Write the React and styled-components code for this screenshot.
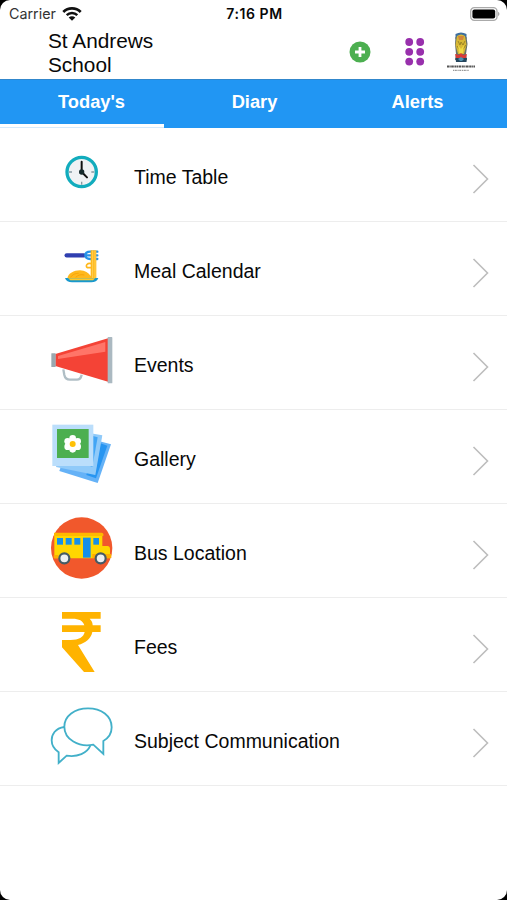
import React from "react";
import styled, { createGlobalStyle } from "styled-components";

const colors = {
  blue: "#2196f3",
  green: "#4caf50",
  purple: "#9830ac",
  divider: "#ededed",
  chevron: "#bdbdbd",
};

const GlobalStyle = createGlobalStyle`
  body {
    margin: 0;
    background: #000;
  }

  * {
    box-sizing: border-box;
  }
`;

const Screen = styled.div`
  display: flex;
  flex-direction: column;
  width: 507px;
  height: 900px;
  overflow: hidden;
  background: #fff;
  border-radius: 10px;
  color: #080808;
  font-family: "Liberation Sans", Arial, sans-serif;
`;

const StatusBar = styled.div`
  display: grid;
  grid-template-columns: 1fr auto 1fr;
  align-items: center;
  height: 27px;
  padding: 0 7px 0 9px;
  font-family: Inter, sans-serif;
  font-size: 14.3px;
`;

const Carrier = styled.div`
  display: flex;
  align-items: center;
  gap: 6px;
  color: #333;
`;

const Time = styled.div`
  font-weight: 600;
  font-size: 14px;
  letter-spacing: 0.55px;
`;

const StyledBattery = styled.svg`
  justify-self: end;
`;

const Header = styled.header`
  display: flex;
  align-items: flex-start;
  height: 52px;
  padding: 2px 31px 0 48px;
`;

const Title = styled.h1`
  width: 130px;
  margin: 0;
  font-size: 20.8px;
  font-weight: 400;
  line-height: 23.5px;
`;

const HeaderActions = styled.div`
  display: flex;
  align-items: center;
  margin-left: auto;
  height: 46px;
`;

const Tabs = styled.nav`
  height: 49px;
  background: ${colors.blue};
  border-top: 1px solid #3187cc;
`;

const TabList = styled.div`
  display: flex;
  height: 44px;
  padding: 0 8px 0 10px;
`;

const Tab = styled.div`
  flex: 1;
  color: #fff;
  font-size: 18.3px;
  font-weight: 700;
  line-height: 44px;
  text-align: center;
`;

const TabIndicator = styled.div`
  width: 164px;
  height: 4px;
  background: #fff;
  border-bottom: 1px solid #d5eafc;
`;

const Menu = styled.ul`
  margin: 0;
  padding: 0;
  list-style: none;
`;

const MenuRow = styled.li`
  display: flex;
  align-items: center;
  height: 94px;
  padding: 0 18px 0 48px;
  border-bottom: 1px solid ${colors.divider};
`;

const RowIcon = styled.svg`
  flex: none;
  width: 66px;
  height: 70px;
  margin-top: -3px;
`;

const RowLabel = styled.span`
  flex: 1;
  padding: 4px 0 0 20px;
  font-size: 19.5px;
  line-height: 24px;
`;

const StyledChevron = styled.svg`
  margin-top: 8px;
`;

const WifiIcon = () => (
  <svg width="20" height="16" viewBox="0 0 20 16" fill="none" stroke="#111">
    <path d="M1.300 6C6 1.200 14 1.200 18.700 6" strokeWidth="2.700" />
    <path d="M4.700 9.200C7.700 6.200 12.300 6.200 15.300 9.200" strokeWidth="2.500" />
    <path d="M10 14.8L6.700 11.500C8.500 9.800 11.500 9.800 13.300 11.500Z" fill="#111" stroke="none" />
  </svg>
);

const BatteryIcon = () => (
  <StyledBattery width="30" height="14" viewBox="0 0 30 14">
    <rect x="0.7" y="0.7" width="26.3" height="12.6" rx="3.6" fill="#fff" stroke="#aaa" strokeWidth="1.3" />
    <rect x="2.4" y="2.4" width="22.8" height="9.2" rx="2" fill="#000" />
    <path d="M28 4.800Q31 7 28 9.200Z" fill="#aaa" />
  </StyledBattery>
);

const AddIcon = () => (
  <svg width="22" height="22" viewBox="0 0 22 22">
    <circle cx="11" cy="11" r="10.5" fill={colors.green} />
    <path d="M11 6V16M6 11H16" stroke="#fff" strokeWidth="2.8" />
  </svg>
);

const StyledGrid = styled.svg`
  margin: 0 20px 0 33px;
`;

const GridIcon = () => (
  <StyledGrid width="22" height="30" viewBox="0 0 22 30" fill={colors.purple}>
    {[5, 14.8, 24.6].map((y) => (
      <React.Fragment key={y}>
        <circle cx="5.2" cy={y} r="3.9" />
        <circle cx="16.2" cy={y} r="3.9" />
      </React.Fragment>
    ))}
  </StyledGrid>
);

const Crest = () => (
  <svg width="30" height="42" viewBox="0 0 30 42">
    <path d="M9.500 3Q15 0 20.500 3V8H9.500Z" fill="#3e6f9f" />
    <path d="M9.500 6L9 13 10 23 9 29H21L20 23 21.500 13 20.500 6Z" fill="#66706a" />
    <path d="M11 5Q15 2 19 5L20.500 14 18 23H12L9.500 14Z" fill="#d8b835" />
    <path d="M12 5H18L17 9H13Z" fill="#d2863b" />
    <path d="M12 10L14 14 15 11 17 14 19 10M11 15L15 21 20 14" fill="none" stroke="#8d7823" strokeWidth="0.8" />
    <path d="M12 14L15 18 18 14 17 22H13Z" fill="#f1dc45" />
    <path d="M9 23L13 24 15 22 17 24 21 23 20 27H10Z" fill="#d83b37" />
    <path d="M9.500 27H21L20.500 31H10Z" fill="#24465e" />
    <path d="M12 28L15 26 18 28 16 30H14Z" fill="#4f91b1" />
    <path d="M1 35.500H29" stroke="#555" strokeWidth="1.800" strokeDasharray="2 0.4 1.3 0.5 2.600 0.6" />
    <path d="M7 39.300H23" stroke="#999" strokeWidth="1.200" strokeDasharray="1.200 0.6 2 0.7" />
  </svg>
);

const ClockArt = () => (
  <>
    <circle cx="125" cy="96" r="44" fill="#eff2f4" stroke="#12acbd" strokeWidth="10" />
    <path d="M87 96H96M154 96H163M125 125V134" stroke="#8799a1" strokeWidth="4" />
    <path d="M125 65V96L141 112" fill="none" stroke="#111" strokeWidth="6" strokeLinecap="round" />
    <circle cx="125" cy="96" r="8" fill="#172b2d" />
  </>
);

const MealArt = () => (
  <>
    <path d="M80 58H132" stroke="#303fb0" strokeWidth="13" strokeLinecap="round" />
    <path d="M172 47H151Q136 47 136 58T151 69H172M136 58H172" fill="none" stroke="#2793e8" strokeWidth="7" strokeLinecap="round" />
    <path d="M82 128C84 112 102 103 120 103C135 104 146 110 152 120V43H169V128Z" fill="#ffb81c" />
    <path d="M158 43V126M165 43V126" stroke="#ffe071" strokeWidth="2" />
    <path d="M154 83C142 80 135 89 142 95H155" fill="none" stroke="#ffb81c" strokeWidth="5" />
    <path d="M92 124C98 114 108 112 116 112M107 124C115 116 124 115 133 117" fill="none" stroke="#f5a000" strokeWidth="2.500" />
    <path d="M75 126H175Q170 139 154 139H96Q80 139 75 126Z" fill="#1899ce" />
    <path d="M84 127H166L159 133H91Z" fill="#ffca28" />
  </>
);

const MegaphoneArt = () => (
  <>
    <path d="M70 133L73 150Q76 164 90 164H111Q122 164 125 149" fill="none" stroke="#b0bec5" strokeWidth="7" />
    <path d="M46 87L204 40V170L46 123Z" fill="#f44336" />
    <path d="M54 93L196 51V80L54 102Z" fill="#ff7568" />
    <rect x="34" y="85" width="13" height="41" rx="1" fill="#9aa8af" />
    <rect x="203" y="36" width="14" height="139" rx="2" fill="#abb9c1" />
  </>
);

const GalleryArt = () => (
  <>
    <path d="M96 57L213 88 173 204 58 168Z" fill="#65b2f7" />
    <path d="M165 79L202 92 168 190 139 180Z" fill="#2795f1" />
    <path d="M76 42L187 61 166 180 48 156Z" fill="#90caf9" />
    <path d="M150 61L173 67 157 155 140 150Z" fill="#42a5f5" />
    <rect x="37" y="29" width="123" height="124" fill="#bbdefb" />
    <rect x="51" y="42" width="95" height="87" fill="#4caf50" />
    <g fill="#fff">
      <circle cx="98" cy="70" r="10" />
      <circle cx="83" cy="79" r="10" />
      <circle cx="113" cy="79" r="10" />
      <circle cx="83" cy="95" r="10" />
      <circle cx="113" cy="95" r="10" />
      <circle cx="98" cy="103" r="10" />
      <circle cx="98" cy="87" r="14" />
    </g>
    <circle cx="98" cy="87" r="9" fill="#ffc107" />
  </>
);

const BusArt = () => (
  <>
    <circle cx="125" cy="114" r="92" fill="#f1582c" />
    <path d="M43 76H187V108H202Q210 108 210 118V145H43Z" fill="#ffd600" />
    <path d="M42 68H185Q190 68 190 73V78H42Z" fill="#ffb900" />
    <g fill="#168fe8">
      <rect x="51" y="84" width="18" height="20" />
      <rect x="77" y="84" width="18" height="20" />
      <rect x="103" y="84" width="18" height="20" />
      <rect x="129" y="83" width="23" height="60" />
      <rect x="160" y="84" width="17" height="20" />
    </g>
    <path d="M157 132H214V144H157ZM41 135H55V145H41Z" fill="#ffad00" />
    <g fill="#eceff1" stroke="#455a64" strokeWidth="6.5">
      <circle cx="73" cy="145" r="15" />
      <circle cx="182" cy="145" r="15" />
    </g>
  </>
);

const RupeeArt = () => (
  <path
    d="M66 30H182V50H149C156 57 158 63 158 70H182V90H157C153 110 137 123 114 129L164 210H132L66 136V114H92C116 114 131 106 134 90H66V70H133C129 56 117 50 98 50H66Z"
    fill="#ffb300"
  />
);

const ChatArt = () => (
  <g fill="none" stroke="#42b0c9" strokeWidth="5.5">
    <path d="M73 90C45 94 35 113 35 130C35 147 44 158 56 166V198L80 176C113 181 141 169 151 146" />
    <path d="M160 143C116 152 73 127 73 89C73 57 104 34 144 34C184 34 215 57 215 91C215 109 206 123 190 132V171Z" />
  </g>
);

// top is the upper edge of the icon's view box, in thirds of a pixel
const items = [
  { label: "Time Table", Art: ClockArt, top: -6 },
  { label: "Meal Calendar", Art: MealArt, top: -12 },
  { label: "Events", Art: MegaphoneArt, top: 3 },
  { label: "Gallery", Art: GalleryArt, top: 15 },
  { label: "Bus Location", Art: BusArt, top: 12 },
  { label: "Fees", Art: RupeeArt, top: 18 },
  { label: "Subject Communication", Art: ChatArt, top: 15 },
];

const MenuItem = ({ label, Art, top }) => (
  <MenuRow>
    <RowIcon viewBox={`24 ${top} 198 210`}>
      <Art />
    </RowIcon>
    <RowLabel>{label}</RowLabel>
    <StyledChevron width="17" height="32" viewBox="0 0 17 32">
      <path d="M1.500 2L15.500 16 1.500 30" fill="none" stroke={colors.chevron} strokeWidth="1.6" />
    </StyledChevron>
  </MenuRow>
);

const App = () => (
  <>
    <GlobalStyle />
    <Screen>
      <StatusBar>
        <Carrier>
          Carrier
          <WifiIcon />
        </Carrier>
        <Time>7:16 PM</Time>
        <BatteryIcon />
      </StatusBar>

      <Header>
        <Title>St Andrews School</Title>
        <HeaderActions>
          <AddIcon />
          <GridIcon />
          <Crest />
        </HeaderActions>
      </Header>

      <Tabs>
        <TabList>
          <Tab>Today's</Tab>
          <Tab>Diary</Tab>
          <Tab>Alerts</Tab>
        </TabList>
        <TabIndicator />
      </Tabs>

      <Menu>
        {items.map((item) => (
          <MenuItem key={item.label} {...item} />
        ))}
      </Menu>
    </Screen>
  </>
);

export default App;
